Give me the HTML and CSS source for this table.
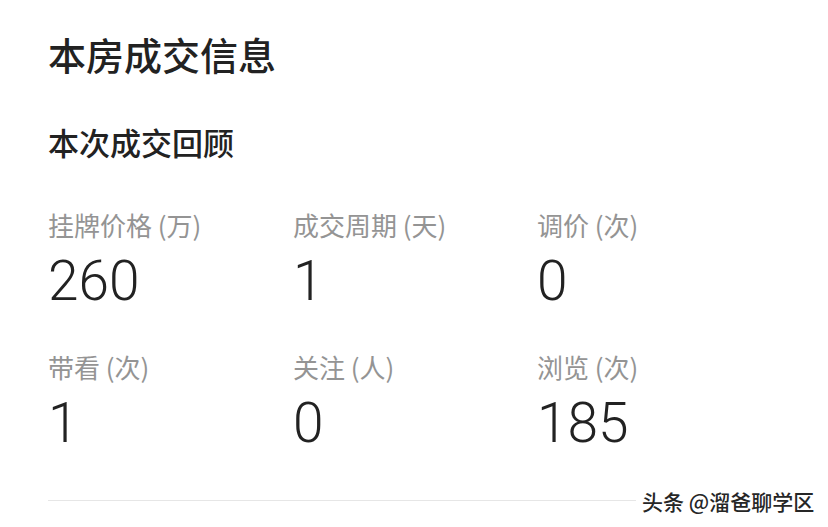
FILE: index.html
```html
<!DOCTYPE html>
<html lang="zh-CN">
<head>
<meta charset="utf-8">
<title>本房成交信息</title>
<link rel="stylesheet" href="styles.css">
</head>
<body>
<main class="page">
  <h1 class="title">本房成交信息</h1>
  <h2 class="subtitle">本次成交回顾</h2>
  <div class="stats">
    <div class="stat"><div class="label">挂牌价格 (万)</div><div class="value">260</div></div>
    <div class="stat"><div class="label">成交周期 (天)</div><div class="value">1</div></div>
    <div class="stat"><div class="label">调价 (次)</div><div class="value">0</div></div>
    <div class="stat"><div class="label">带看 (次)</div><div class="value">1</div></div>
    <div class="stat"><div class="label">关注 (人)</div><div class="value">0</div></div>
    <div class="stat"><div class="label">浏览 (次)</div><div class="value">185</div></div>
  </div>
  <div class="divider"></div>
</main>
<div class="watermark">头条 @溜爸聊学区</div>
</body>
</html>
```
FILE: styles.css
```css
html, body {
  margin: 0;
  padding: 0;
  background: #fff;
  width: 828px;
  height: 527px;
  overflow: hidden;
}
body {
  position: relative;
  font-family: "Noto Sans CJK SC", "Noto Sans", sans-serif;
  color: #222;
}
.page {
  padding: 35px 0 0 48px;
}
.title {
  margin: 0;
  font-size: 38px;
  line-height: 38px;
  font-weight: 500;
  color: #222;
}
.subtitle {
  margin: 53px 0 0;
  font-size: 31px;
  line-height: 31px;
  font-weight: 500;
  color: #222;
}
.stats {
  margin-top: 54px;
  display: grid;
  grid-template-columns: 245px 244px 245px;
  row-gap: 44px;
}
.label {
  font-size: 26px;
  line-height: 27px;
  font-weight: 400;
  color: #949494;
}
.value {
  margin-top: 16px;
  font-family: Roboto, "Liberation Sans", sans-serif;
  font-weight: 300;
  font-size: 55px;
  line-height: 55px;
  color: #222;
}
.divider {
  margin-top: 49px;
  height: 1px;
  background: #e6e6e6;
}
.watermark {
  position: absolute;
  left: 636px;
  top: 484px;
  width: 192px;
  height: 34px;
  padding-left: 6px;
  box-sizing: border-box;
  background: #fff;
  font-size: 21px;
  line-height: 34px;
  font-weight: 500;
  color: #262626;
  white-space: nowrap;
}
```
